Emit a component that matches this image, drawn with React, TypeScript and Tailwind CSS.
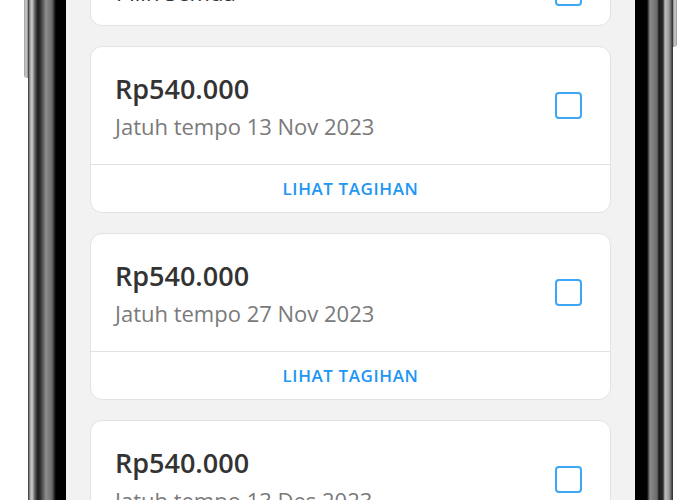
const bills = [
  { amount: 'Rp540.000', due: '13 Nov 2023' },
  { amount: 'Rp540.000', due: '27 Nov 2023' },
  { amount: 'Rp540.000', due: '13 Des 2023' },
];

function Checkbox() {
  return <div className="w-[27px] h-[27px] shrink-0 rounded-[4px] border-2 border-[#3ea6f4] bg-white" />;
}

export default function App() {
  return (
    <div className="w-[700px] h-[500px] overflow-hidden bg-white flex" style={{ fontFamily: '"Open Sans", "Noto Sans", sans-serif' }}>
      <div className="w-[24px] shrink-0" />
      {/* left side button */}
      <div className="w-[4px] shrink-0">
        <div className="h-[78px] rounded-bl-[3px] bg-[linear-gradient(90deg,#9a9a9a,#d0d0d0,#8a8a8a)]" />
      </div>
      {/* left bezel */}
      <div className="w-[38px] shrink-0 bg-[linear-gradient(90deg,#2a2a2a_0px,#a0a0a0_2px,#cfcfcf_4px,#5a5a5a_7px,#1a1a1a_10px,#3a3a3a_13px,#8e8e8e_18px,#6a6a6a_24px,#151515_27px,#000_28px,#000_38px)]" />
      {/* screen */}
      <div className="w-[569px] shrink-0 bg-[#f2f2f2] px-[24px] flex flex-col gap-[20px]">
        <div className="mt-[-41px] h-[67px] shrink-0 rounded-[12px] border border-[#e2e2e2] bg-white flex items-center justify-between pl-[25px] pr-[28px]">
          <span className="text-[22px] text-[#333]">Pilih Semua</span>
          <Checkbox />
        </div>
        {bills.map((b, i) => (
          <div key={i} className="shrink-0 rounded-[12px] border border-[#e2e2e2] bg-white">
            <div className="h-[117px] flex items-center justify-between pl-[24px] pr-[28px]">
              <div>
                <p className="text-[27px] leading-[34px] font-semibold text-[#333]">{b.amount}</p>
                <p className="mt-[6px] text-[22px] leading-[28px] text-[#7a7a7a]">Jatuh tempo {b.due}</p>
              </div>
              <Checkbox />
            </div>
            <div className="h-[48px] border-t border-[#e2e2e2] flex items-center justify-center">
              <span className="text-[17px] font-semibold tracking-[0.6px] text-[#2196f3]">LIHAT TAGIHAN</span>
            </div>
          </div>
        ))}
      </div>
      {/* right bezel */}
      <div className="w-[38px] shrink-0 bg-[linear-gradient(90deg,#000_0px,#000_12px,#8a8a8a_15px,#6a6a6a_22px,#1a1a1a_24px,#2a2a2a_28px,#bdbdbd_30px,#9a9a9a_34px,#2a2a2a_38px)]" />
      {/* right side button */}
      <div className="w-[4px] shrink-0">
        <div className="h-[47px] rounded-br-[3px] bg-[linear-gradient(90deg,#8a8a8a,#d0d0d0,#9a9a9a)]" />
      </div>
    </div>
  );
}
